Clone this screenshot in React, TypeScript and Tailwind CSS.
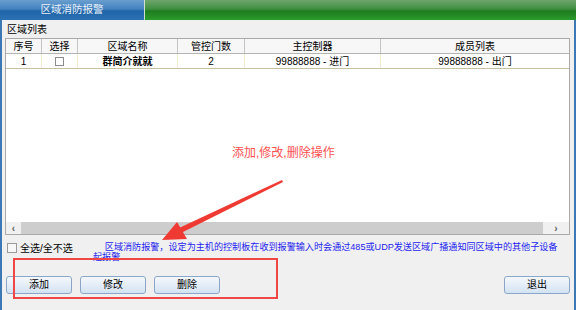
import React from "react";

const cols = [
  { label: "序号", w: "w-[36px]" },
  { label: "选择", w: "w-[36px]" },
  { label: "区域名称", w: "w-[100px]" },
  { label: "管控门数", w: "w-[67px]" },
  { label: "主控制器", w: "w-[136px]" },
  { label: "成员列表", w: "flex-1" },
];

function Btn({ children, className = "" }: { children: React.ReactNode; className?: string }) {
  return (
    <button
      className={
        "h-[18px] w-[66px] rounded-[3px] border border-[#8aa6c8] bg-[linear-gradient(to_bottom,#f4f8fc,#e4edf7_50%,#d3e2f2)] text-[10px] leading-none text-black " +
        className
      }
    >
      {children}
    </button>
  );
}

export default function App() {
  return (
    <div
      className="relative flex h-[310px] w-[576px] flex-col overflow-hidden bg-[#f0f0f0] text-black"
      style={{ fontFamily: '"Liberation Sans", "Noto Sans CJK SC", sans-serif' }}
    >
      {/* title bar */}
      <div className="flex h-[20px] shrink-0">
        <div className="flex w-[144px] items-center justify-center bg-[linear-gradient(to_bottom,#6a9fcf,#4282c0_45%,#1f64a6_55%,#2b72b4)] text-[10.5px] text-[#e9f1fa]">
          区域消防报警
        </div>
        <div className="w-px bg-[#cfe0cf]" />
        <div className="flex-1 bg-[linear-gradient(to_bottom,#6ea56e,#3f8f3f_45%,#1f7c1f_55%,#2a9b2a)]" />
      </div>

      {/* body */}
      <div className="flex flex-1 flex-col border-l-2 border-r-2 border-[#3c78b4] pl-[3px] pr-[4px]">
        <div className="flex h-[18px] items-center pl-[2px] text-[10px]">区域列表</div>

        <div className="flex h-[197px] flex-col border border-[#a9a9a9] bg-white">
          {/* header */}
          <div className="flex h-[15px] border-b border-[#b4b4b4] bg-[#f7f7f7] text-[10px]">
            {cols.map((c, i) => (
              <div
                key={c.label}
                className={`${c.w} flex items-center justify-center ${i < cols.length - 1 ? "border-r border-[#c4c4c4]" : ""}`}
              >
                {c.label}
              </div>
            ))}
          </div>
          {/* data row */}
          <div className="flex h-[15px] border-b border-[#c8c0a4] text-[10px]">
            <div className="flex w-[36px] items-center justify-center border-r border-[#f3ecd0]">1</div>
            <div className="flex w-[36px] items-center justify-center border-r border-[#f3ecd0]">
              <div className="h-[9px] w-[9px] border border-[#8c8c8c] bg-white" />
            </div>
            <div className="flex w-[100px] items-center justify-center border-r border-[#f3ecd0] font-semibold">
              群简介就就
            </div>
            <div className="flex w-[67px] items-center justify-center border-r border-[#f3ecd0]">2</div>
            <div className="flex w-[136px] items-center justify-center border-r border-[#f3ecd0]">
              99888888 - 进门
            </div>
            <div className="flex flex-1 items-center justify-center">99888888 - 出门</div>
          </div>
          <div className="flex-1" />
          {/* horizontal scrollbar */}
          <div className="flex h-[12px] items-center bg-[#f0f0f0] text-[10px] font-bold text-[#606060]">
            <div className="flex w-[15px] items-center justify-center">‹</div>
            <div className="h-full flex-1 bg-[#cdcdcd]" />
            <div className="flex w-[26px] items-center justify-center">›</div>
          </div>
        </div>

        {/* select all + note */}
        <div className="flex h-[24px] items-center whitespace-nowrap pl-[2px] pt-[2px]">
          <div className="h-[10px] w-[10px] shrink-0 border border-[#9a9a9a] bg-[#f8f8f8]" />
          <span className="ml-[3px] shrink-0 text-[10px]">全选/全不选</span>
          <span className="ml-[32px] text-[9.1px] leading-none text-[#2424f0]">
            区域消防报警，设定为主机的控制板在收到报警输入时会通过485或UDP发送区域广播通知同区域中的其他子设备
          </span>
        </div>

        {/* buttons */}
        <div className="mt-[17px] flex items-center pl-[1px]">
          <Btn>添加</Btn>
          <Btn className="ml-[8px]">修改</Btn>
          <Btn className="ml-[8px]">删除</Btn>
          <Btn className="ml-auto">退出</Btn>
        </div>
      </div>

      {/* overlays: annotation */}
      <span className="absolute left-[93px] top-[253px] text-[9.1px] leading-none text-[#2424f0]">起报警</span>
      <span className="absolute left-[232px] top-[144px] text-[12px] text-[#ff5050]">添加,修改,删除操作</span>
      <div className="pointer-events-none absolute left-[13px] top-[258px] h-[41px] w-[265px] border-2 border-[#f04646]" />
      <svg className="pointer-events-none absolute left-0 top-0" width="576" height="310">
        <polygon points="282,180 283,182 181,233 179,228" fill="#ee3a32" />
        <polygon points="162,240 177,222 187,239" fill="#ee3a32" />
      </svg>
    </div>
  );
}
